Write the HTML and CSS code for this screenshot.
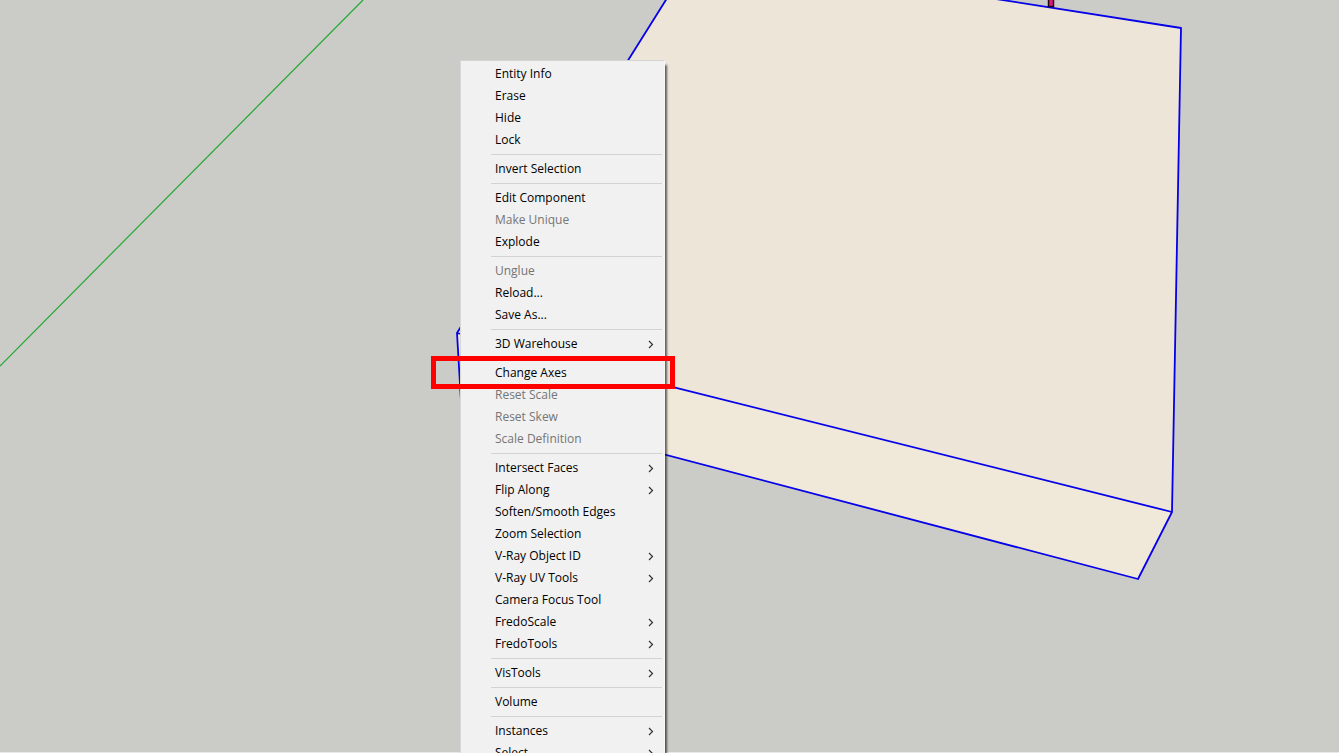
FILE: index.html
```
<!DOCTYPE html>
<html lang="en">
<head>
    <meta charset="UTF-8">
    <meta name="viewport" content="width=device-width, initial-scale=1.0">
    <title>Component context menu</title>
    <link rel="stylesheet" href="styles.css">
</head>
<body>
    <main class="viewport">
        <svg class="scene" viewBox="0 0 1339 753" preserveAspectRatio="xMinYMin slice" aria-hidden="true">
            <!-- green axis -->
            <path class="axis" d="M0 366L363 0"/>
            <!-- box: top face, then front face -->
            <path class="face-top" d="M457 333L696 -48L1181 28L1172 512Z"/>
            <path class="face-front" d="M457 333L1172 512L1138 579L461 401Z"/>
            <path class="edge" d="M457 333L696 -48L1181 28L1172 512L1138 579L461 401L457 333L1172 512"/>
            <!-- handle -->
            <path class="handle" d="M1048.5 -3V6.5H1053.500V-3Z"/>
        </svg>

        <ul class="menu">
            <li><button class="item">Entity Info</button></li>
            <li><button class="item">Erase</button></li>
            <li><button class="item">Hide</button></li>
            <li><button class="item">Lock</button></li>
            <li class="separator"></li>
            <li><button class="item">Invert Selection</button></li>
            <li class="separator"></li>
            <li><button class="item">Edit Component</button></li>
            <li><button class="item" disabled>Make Unique</button></li>
            <li><button class="item">Explode</button></li>
            <li class="separator"></li>
            <li><button class="item" disabled>Unglue</button></li>
            <li><button class="item">Reload...</button></li>
            <li><button class="item">Save As...</button></li>
            <li class="separator"></li>
            <li><button class="item">3D Warehouse <svg class="arrow" viewBox="0 0 6 10"><path d="M1 2L4.500 5.500L1 9"/></svg></button></li>
            <li class="separator"></li>
            <li class="marked"><button class="item">Change Axes</button></li>
            <li><button class="item" disabled>Reset Scale</button></li>
            <li><button class="item" disabled>Reset Skew</button></li>
            <li><button class="item" disabled>Scale Definition</button></li>
            <li class="separator"></li>
            <li><button class="item">Intersect Faces <svg class="arrow" viewBox="0 0 6 10"><path d="M1 2L4.500 5.500L1 9"/></svg></button></li>
            <li><button class="item">Flip Along <svg class="arrow" viewBox="0 0 6 10"><path d="M1 2L4.500 5.500L1 9"/></svg></button></li>
            <li><button class="item">Soften/Smooth Edges</button></li>
            <li><button class="item">Zoom Selection</button></li>
            <li><button class="item">V-Ray Object ID <svg class="arrow" viewBox="0 0 6 10"><path d="M1 2L4.500 5.500L1 9"/></svg></button></li>
            <li><button class="item">V-Ray UV Tools <svg class="arrow" viewBox="0 0 6 10"><path d="M1 2L4.500 5.500L1 9"/></svg></button></li>
            <li><button class="item">Camera Focus Tool</button></li>
            <li><button class="item">FredoScale <svg class="arrow" viewBox="0 0 6 10"><path d="M1 2L4.500 5.500L1 9"/></svg></button></li>
            <li><button class="item">FredoTools <svg class="arrow" viewBox="0 0 6 10"><path d="M1 2L4.500 5.500L1 9"/></svg></button></li>
            <li class="separator"></li>
            <li><button class="item">VisTools <svg class="arrow" viewBox="0 0 6 10"><path d="M1 2L4.500 5.500L1 9"/></svg></button></li>
            <li class="separator"></li>
            <li><button class="item">Volume</button></li>
            <li class="separator"></li>
            <li><button class="item">Instances <svg class="arrow" viewBox="0 0 6 10"><path d="M1 2L4.500 5.500L1 9"/></svg></button></li>
            <li><button class="item">Select <svg class="arrow" viewBox="0 0 6 10"><path d="M1 2L4.500 5.500L1 9"/></svg></button></li>
        </ul>
    </main>
</body>
</html>
```
FILE: styles.css
```
* {
    box-sizing: border-box;
}
body {
    margin: 0;
    font-family: "Segoe UI", "Open Sans", "Noto Sans", sans-serif;
    font-size: 12px;
    color: #000;
}
.viewport {
    position: relative;
    height: 100vh;
    overflow: hidden;
    background-color: #cbccc7;
}
.scene {
    display: block;
    width: 100%;
    height: 100vh;
    border-bottom: 1px solid #e9e9e8;
}
.axis {
    stroke: #22a832;
    stroke-width: 1.2;
}
.face-top {
    fill: #ede5d8;
}
.face-front {
    fill: #f0e8d8;
}
.edge {
    fill: none;
    stroke: #0600e8;
    stroke-width: 1.8;
    stroke-linejoin: round;
}
.handle {
    fill: #e0187c;
    stroke: #1a0a14;
    stroke-width: 1.5;
}
.menu {
    position: absolute;
    top: 60px;
    left: 460px;
    width: 205px;
    margin: 0;
    padding: 2px 0;
    list-style: none;
    background-color: #f1f1f1;
    border: 1px solid #d4d4d2;
    border-left-color: #d8d8d6;
    border-right-color: #f8f8f8;
    box-shadow: 2px 5px 2px rgba(0, 0, 0, 0.6);
}
.item {
    display: flex;
    align-items: center;
    justify-content: space-between;
    width: 100%;
    height: 22px;
    padding: 0 10px 0 34px;
    border: none;
    background: none;
    font: inherit;
    line-height: 22px;
    color: inherit;
    text-align: left;
}
.item:not(:disabled):hover {
    background-color: #fff;
}
.item:disabled {
    color: #757575;
}
.arrow {
    width: 6px;
    height: 10px;
    fill: none;
    stroke: #333;
    stroke-width: 1.2;
}
.separator {
    height: 7px;
    padding: 3px 2px 3px 30px;
}
.separator::before {
    content: "";
    display: block;
    height: 1px;
    background-color: #d2d2d2;
}
/* red frame around the current step */
.marked {
    position: relative;
}
.marked::after {
    content: "";
    position: absolute;
    top: -6px;
    right: -11px;
    bottom: -5px;
    left: -30px;
    border: 5px solid #fe0000;
    pointer-events: none;
}
```
